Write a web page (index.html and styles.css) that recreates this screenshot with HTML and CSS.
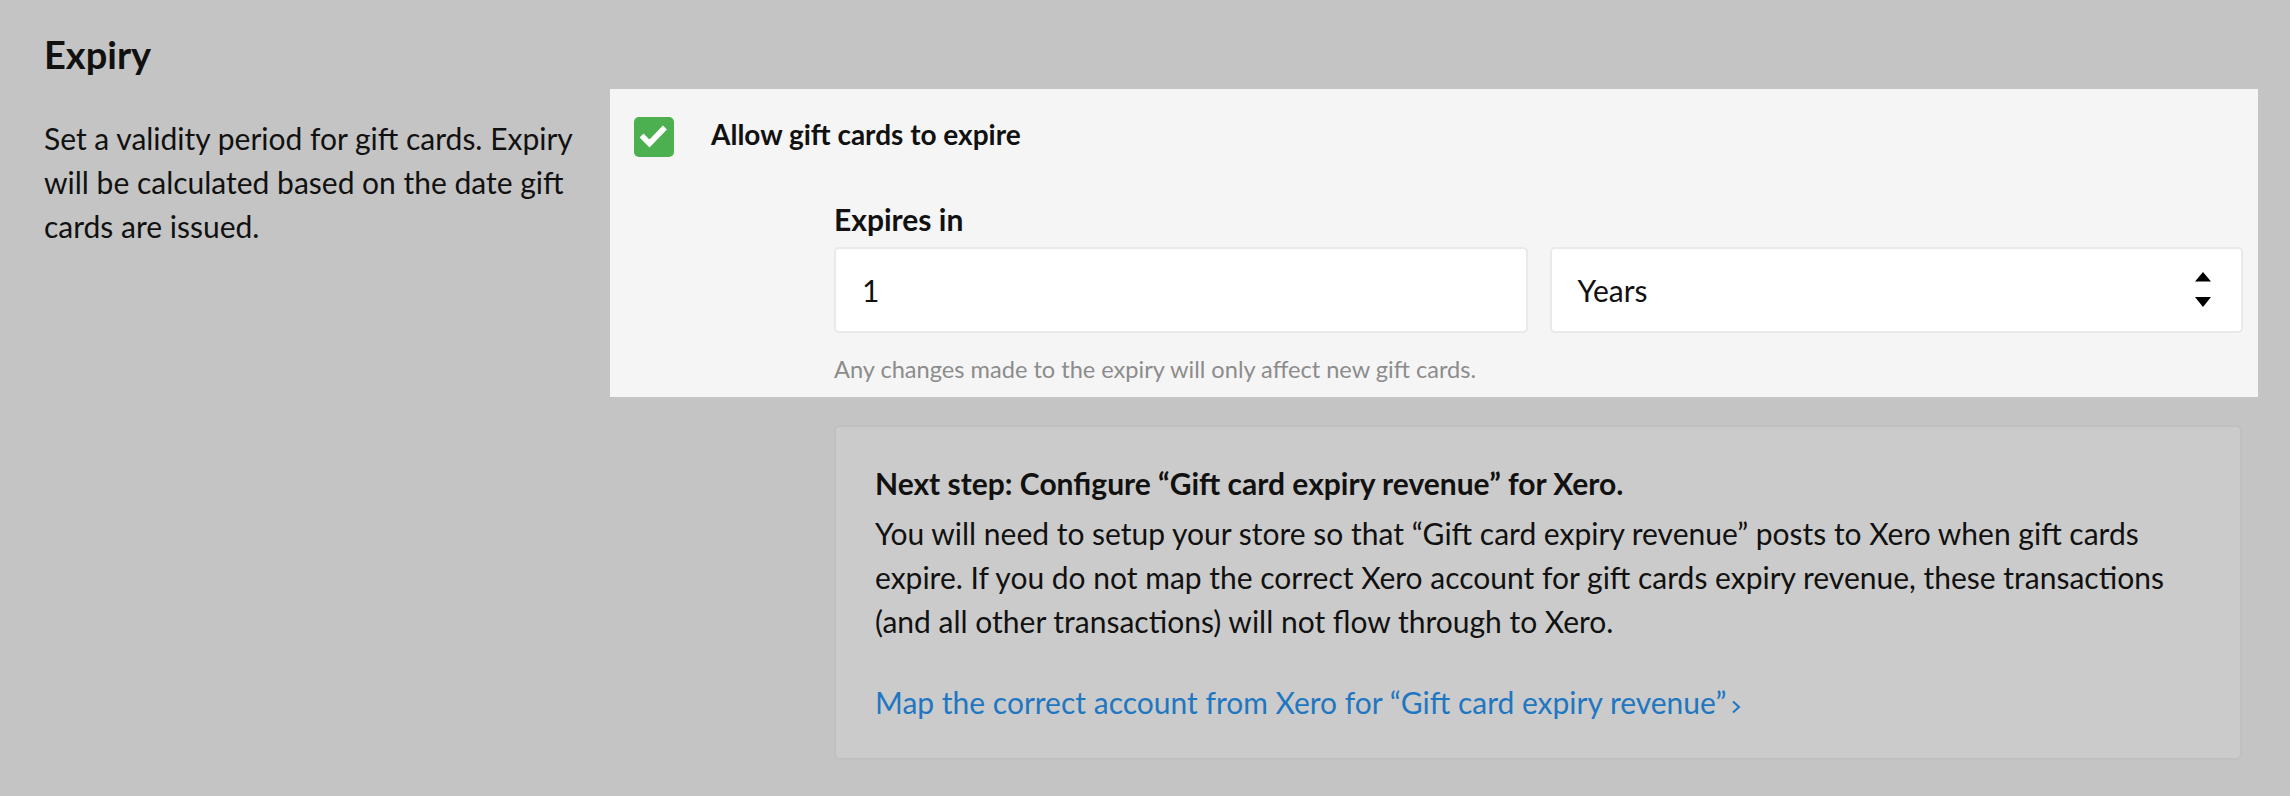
FILE: index.html
```html
<!DOCTYPE html>
<html lang="en">
<head>
<meta charset="utf-8">
<title>Expiry</title>
<link rel="stylesheet" href="styles.css">
</head>
<body>
<div class="page">
  <h2 class="heading">Expiry</h2>
  <div class="row">
    <p class="desc">Set a validity period for gift cards. Expiry will be calculated based on the date gift cards are issued.</p>
    <div class="right">
      <div class="panel">
        <div class="check-row">
          <span class="checkbox">
            <svg width="40" height="40" viewBox="0 0 40 40"><path d="M9.5 20.5 L15.5 26.5 L29 12.5" fill="none" stroke="#fff" stroke-width="5.5" stroke-linecap="square" stroke-linejoin="miter"/></svg>
          </span>
          <span class="check-label">Allow gift cards to expire</span>
        </div>
        <div class="fields">
          <div class="field-label">Expires in</div>
          <div class="field-row">
            <div class="input">1</div>
            <div class="select">
              <span>Years</span>
              <svg class="arrows" width="16" height="36" viewBox="0 0 16 36"><path d="M8 0 L16 9.5 L0 9.5 Z M0 25 L16 25 L8 35 Z" fill="#000"/></svg>
            </div>
          </div>
          <div class="help">Any changes made to the expiry will only affect new gift cards.</div>
        </div>
      </div>
      <div class="info">
        <div class="info-title">Next step: Configure “Gift card expiry revenue” for Xero.</div>
        <p class="info-body">You will need to setup your store so that “Gift card expiry revenue” posts to Xero when gift cards expire. If you do not map the correct Xero account for gift cards expiry revenue, these transactions (and all other transactions) will not flow through to Xero.</p>
        <a class="info-link" href="#">Map the correct account from Xero for “Gift card expiry revenue”<svg class="chev" width="10" height="16" viewBox="0 0 10 16"><path d="M2 2.5 L8 8 L2 13.5" fill="none" stroke="#1f77c2" stroke-width="2"/></svg></a>
      </div>
    </div>
  </div>
</div>
</body>
</html>
```

FILE: styles.css
```css
html, body {
  margin: 0;
  padding: 0;
  background: #c4c4c4;
}
body {
  font-family: Lato, "Open Sans", "Liberation Sans", sans-serif;
  color: #111;
  width: 2290px;
  height: 796px;
  overflow: hidden;
}
.page {
  padding: 30px 32px 0 44px;
}
.heading {
  margin: 0;
  font-size: 38px;
  line-height: 48px;
  font-weight: 700;
}
.row {
  display: flex;
  margin-top: 11px;
}
.desc {
  width: 546px;
  margin: 0;
  padding: 27px 20px 0 0;
  font-size: 30px;
  line-height: 44px;
}
.right {
  flex: 1;
  display: flex;
  flex-direction: column;
}
.panel {
  background: #f5f5f5;
  padding: 28px 15px 12px 24px;
}
.check-row {
  display: flex;
  align-items: flex-start;
  height: 40px;
}
.checkbox {
  width: 40px;
  height: 40px;
  border-radius: 5px;
  background: #4caf50;
  display: flex;
}
.check-label {
  margin-left: 37px;
  margin-top: -3px;
  font-size: 28px;
  font-weight: 700;
  line-height: 40px;
}
.fields {
  margin-left: 200px;
  margin-top: 42px;
}
.field-label {
  font-size: 30px;
  font-weight: 700;
  line-height: 40px;
}
.field-row {
  display: grid;
  grid-template-columns: 1fr 1fr;
  gap: 22px;
  margin-top: 8px;
}
.input, .select {
  height: 86px;
  box-sizing: border-box;
  background: #fff;
  border: 2px solid #e9e9e9;
  border-radius: 5px;
  font-size: 30px;
  display: flex;
  align-items: center;
  padding: 0 26px;
}
.select {
  justify-content: space-between;
  padding-right: 30px;
}
.help {
  margin-top: 20px;
  font-size: 23.6px;
  line-height: 32px;
  color: #8c8c8c;
}
.info {
  margin: 28px 16px 0 224px;
  background: #cbcbcb;
  border: 2px solid #c0c0c0;
  border-radius: 6px;
  padding: 34px 40px 34px 39px;
}
.info-title {
  font-size: 30px;
  font-weight: 700;
  line-height: 44px;
}
.info-body {
  margin: 6px 0 0;
  font-size: 30px;
  line-height: 44px;
}
.info-link {
  display: inline-block;
  margin-top: 37px;
  font-size: 30px;
  line-height: 44px;
  color: #1f77c2;
  text-decoration: none;
}
.chev {
  margin-left: 5px;
  vertical-align: -1px;
}
```
